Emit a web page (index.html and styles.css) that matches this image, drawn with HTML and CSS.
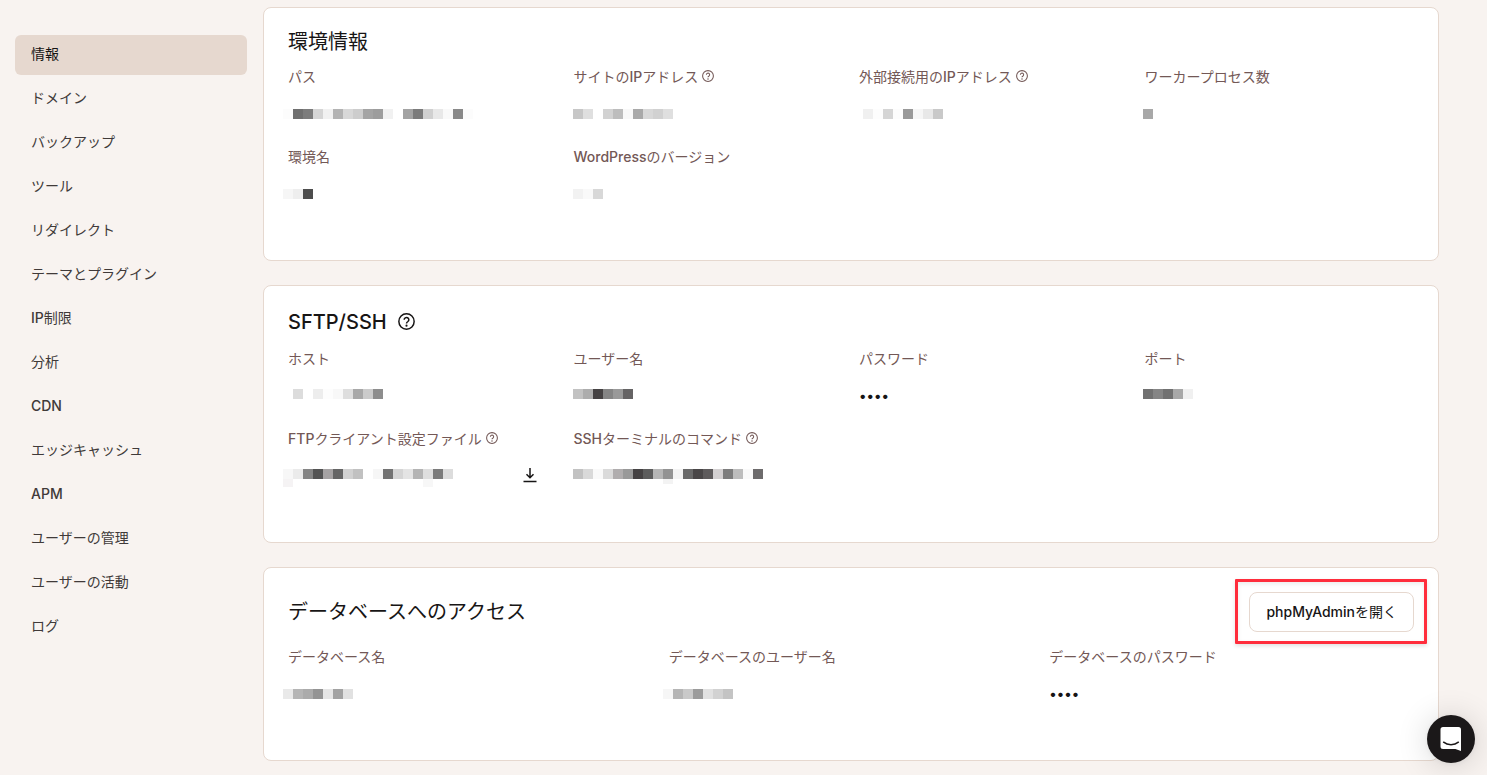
FILE: index.html
```html
<!DOCTYPE html>
<html lang="ja">
<head>
<meta charset="utf-8">
<meta name="viewport" content="width=device-width, initial-scale=1">
<title>情報</title>
<link rel="stylesheet" href="styles.css">
</head>
<body>
<svg class="symbols" aria-hidden="true">
  <symbol id="help" viewBox="0 0 16 16">
    <circle cx="8" cy="8" r="7.2" fill="none" stroke="currentColor" stroke-width="1.4"/>
    <path d="M5.8 6.300a2.200 2.100 0 1 1 3.500 1.700C8.400 8.600 8 8.900 8 9.800" fill="none" stroke="currentColor" stroke-width="1.400"/>
    <circle cx="8" cy="11.900" r="1" fill="currentColor"/>
  </symbol>
</svg>
<div class="layout">
  <nav class="sidebar" aria-label="サイトメニュー">
    <a class="nav-item active" href="#info" aria-current="page">情報</a>
    <a class="nav-item" href="#domains">ドメイン</a>
    <a class="nav-item" href="#backups">バックアップ</a>
    <a class="nav-item" href="#tools">ツール</a>
    <a class="nav-item" href="#redirects">リダイレクト</a>
    <a class="nav-item" href="#plugins">テーマとプラグイン</a>
    <a class="nav-item" href="#ip"><span class="latin">IP</span>制限</a>
    <a class="nav-item" href="#analytics">分析</a>
    <a class="nav-item" href="#cdn"><span class="latin">CDN</span></a>
    <a class="nav-item" href="#edge">エッジキャッシュ</a>
    <a class="nav-item" href="#apm"><span class="latin">APM</span></a>
    <a class="nav-item" href="#users">ユーザーの管理</a>
    <a class="nav-item" href="#activity">ユーザーの活動</a>
    <a class="nav-item" href="#logs">ログ</a>
  </nav>

  <main class="main">
    <section class="card">
      <h2 class="title title-compact">環境情報</h2>
      <dl class="grid">
        <div class="item">
          <dt class="label">パス</dt>
          <dd class="value"><svg class="mosaic" width="190" height="10"><path fill="#fcfcfc" d="M-5 0h10v10h-10z"/><path fill="#6f6f6f" d="M5 0h10v10H5z"/><path fill="#7c7c7c" d="M15 0h10v10H15z"/><path fill="#d5d5d5" d="M25 0h10v10H25z"/><path fill="#f1f1f1" d="M35 0h10v10H35z"/><path fill="#b3b3b3" d="M45 0h10v10H45z"/><path fill="#d8d8d8" d="M55 0h10v10H55z"/><path fill="#cdcdcd" d="M65 0h10v10H65z"/><path fill="#a4a4a4" d="M75 0h10v10H75z"/><path fill="#9d9d9d" d="M85 0h10v10H85z"/><path fill="#f1f1f1" d="M95 0h10v10H95z"/><path fill="#a3a3a3" d="M115 0h10v10h-10z"/><path fill="#7b7b7b" d="M125 0h10v10h-10z"/><path fill="#d0d0d0" d="M135 0h10v10h-10z"/><path fill="#e8e8e8" d="M145 0h10v10h-10z"/><path fill="#f9f9f9" d="M155 0h10v10h-10z"/><path fill="#898989" d="M165 0h10v10h-10z"/><path fill="#fcfcfc" d="M175 0h10v10h-10z"/></svg></dd>
        </div>
        <div class="item">
          <dt class="label"><span>サイトの<span class="latin">IP</span>アドレス</span> <button class="help" type="button" aria-label="サイトのIPアドレスのヘルプ"><svg><use href="#help"/></svg></button></dt>
          <dd class="value"><svg class="mosaic" width="100" height="10" viewBox="1 0 100 10"><path fill="#c7c7c7" d="M0 0h10v10H0z"/><path fill="#dfdfdf" d="M10 0h10v10H10z"/><path fill="#d2d2d2" d="M30 0h10v10H30z"/><path fill="#bdbdbd" d="M40 0h10v10H40z"/><path fill="#f8f8f8" d="M50 0h10v10H50z"/><path fill="#a9a9a9" d="M60 0h10v10H60z"/><path fill="#d8d8d8" d="M70 0h10v10H70z"/><path fill="#d1d1d1" d="M80 0h10v10H80z"/><path fill="#dfdfdf" d="M90 0h10v10H90z"/></svg></dd>
        </div>
        <div class="item">
          <dt class="label"><span>外部接続用の<span class="latin">IP</span>アドレス</span> <button class="help" type="button" aria-label="外部接続用のIPアドレスのヘルプ"><svg><use href="#help"/></svg></button></dt>
          <dd class="value"><svg class="mosaic" width="90" height="10"><path fill="#f0f0f0" d="M4 0h10v10H4z"/><path fill="#fdfdfd" d="M14 0h10v10H14z"/><path fill="#d5d5d5" d="M24 0h10v10H24z"/><path fill="#fcfcfc" d="M34 0h10v10H34z"/><path fill="#999" d="M44 0h10v10H44z"/><path fill="#f6f6f6" d="M54 0h10v10H54z"/><path fill="#e8e8e8" d="M64 0h10v10H64z"/><path fill="#c9c9c9" d="M74 0h10v10H74z"/></svg></dd>
        </div>
        <div class="item">
          <dt class="label">ワーカープロセス数</dt>
          <dd class="value"><svg class="mosaic" width="20" height="10" viewBox="1 0 20 10"><path fill="#a8a8a8" d="M-1 0h10v10H-1z"/></svg></dd>
        </div>
        <div class="item">
          <dt class="label">環境名</dt>
          <dd class="value"><svg class="mosaic" width="30" height="10"><path fill="#f6f6f6" d="M-5 0h10v10h-10z"/><path fill="#eee" d="M5 0h10v10H5z"/><path fill="#4d4d4d" d="M15 0h10v10H15z"/></svg></dd>
        </div>
        <div class="item">
          <dt class="label"><span><span class="latin">WordPress</span>のバージョン</span></dt>
          <dd class="value"><svg class="mosaic" width="30" height="10" viewBox="1 0 30 10"><path fill="#f2f2f2" d="M0 0h10v10H0z"/><path fill="#f9f9f9" d="M10 0h10v10H10z"/><path fill="#d8d8d8" d="M20 0h10v10H20z"/></svg></dd>
        </div>
      </dl>
    </section>

    <section class="card">
      <h2 class="title"><span class="latin">SFTP/SSH</span> <button class="help help-large" type="button" aria-label="SFTP/SSHのヘルプ"><svg><use href="#help"/></svg></button></h2>
      <dl class="grid">
        <div class="item">
          <dt class="label">ホスト</dt>
          <dd class="value"><svg class="mosaic" width="100" height="14"><path fill="#dcdcdc" d="M5 0h10v10H5z"/><path fill="#ededed" d="M25 0h10v10H25z"/><path fill="#fdfdfd" d="M35 0h10v10H35z"/><path fill="#f8f8f8" d="M45 0h10v10H45z"/><path fill="#dedede" d="M55 0h10v10H55z"/><path fill="#a8a8a8" d="M65 0h10v10H65z"/><path fill="#cbcbcb" d="M75 0h10v10H75z"/><path fill="#8d8d8d" d="M85 0h10v10H85z"/></svg></dd>
        </div>
        <div class="item">
          <dt class="label">ユーザー名</dt>
          <dd class="value"><svg class="mosaic" width="60" height="14" viewBox="1 0 60 14"><path fill="#c2c2c2" d="M0 0h10v10H0z"/><path fill="#adadad" d="M10 0h10v10H10z"/><path fill="#454243" d="M20 0h10v10H20z"/><path fill="#858585" d="M30 0h10v10H30z"/><path fill="#999" d="M40 0h10v10H40z"/><path fill="#656364" d="M50 0h10v10H50z"/></svg></dd>
        </div>
        <div class="item">
          <dt class="label">パスワード</dt>
          <dd class="value dots">••••</dd>
        </div>
        <div class="item">
          <dt class="label">ポート</dt>
          <dd class="value"><svg class="mosaic" width="50" height="14" viewBox="1 0 50 14"><path fill="#717171" d="M-1 0h10v10H-1z"/><path fill="#858585" d="M9 0h10v10H9z"/><path fill="#717171" d="M19 0h10v10H19z"/><path fill="#a8a8a8" d="M29 0h10v10H29z"/><path fill="#f0f0f0" d="M39 0h10v10H39z"/></svg></dd>
        </div>
        <div class="item">
          <dt class="label"><span><span class="latin">FTP</span>クライアント設定ファイル</span> <button class="help" type="button" aria-label="FTPクライアント設定ファイルのヘルプ"><svg><use href="#help"/></svg></button></dt>
          <dd class="value"><svg class="mosaic" width="170" height="14"><path fill="#f7f7f7" d="M-5 0h10v10h-10zM135 10h10v8h-10z"/><path fill="#f5f3f4" d="M-5 10h10v8h-10z"/><path fill="#ebebeb" d="M5 0h10v10H5z"/><path fill="#858585" d="M15 0h10v10H15z"/><path fill="#535353" d="M25 0h10v10H25z"/><path fill="#a5a2a3" d="M35 0h10v10H35z"/><path fill="#656565" d="M45 0h10v10H45z"/><path fill="#d1d1d1" d="M55 0h10v10H55z"/><path fill="#c1c1c1" d="M65 0h10v10H65z"/><path fill="#f6f6f6" d="M85 0h10v10H85z"/><path fill="#737373" d="M95 0h10v10H95z"/><path fill="#d5d5d5" d="M105 0h10v10h-10z"/><path fill="#e4e4e4" d="M115 0h10v10h-10z"/><path fill="#b4b4b4" d="M125 0h10v10h-10z"/><path fill="#dedede" d="M135 0h10v10h-10z"/><path fill="#7b7b7b" d="M145 0h10v10h-10z"/><path fill="#dcdcdc" d="M155 0h10v10h-10z"/></svg>
            <button class="download" type="button" aria-label="ダウンロード"><svg width="16" height="16" viewBox="0 0 16 16" fill="none" stroke="currentColor" stroke-width="1.500"><path d="M8 0v9.500M4.500 6.200 8 9.700l3.500-3.500M1.500 13.500h13"/></svg></button></dd>
        </div>
        <div class="item">
          <dt class="label"><span><span class="latin">SSH</span>ターミナルのコマンド</span> <button class="help" type="button" aria-label="SSHターミナルのコマンドのヘルプ"><svg><use href="#help"/></svg></button></dt>
          <dd class="value"><svg class="mosaic" width="190" height="14" viewBox="1 0 190 14"><path fill="#c2c2c2" d="M0 0h10v10H0z"/><path fill="#d9d9d9" d="M10 0h10v10H10z"/><path fill="#f9f9f9" d="M20 0h10v10H20z"/><path fill="#dadada" d="M30 0h10v10H30z"/><path fill="#b0adae" d="M40 0h10v10H40z"/><path fill="#999" d="M50 0h10v10H50z"/><path fill="#454243" d="M60 0h10v10H60z"/><path fill="#5d5d5d" d="M70 0h10v10H70z"/><path fill="#b6b6b6" d="M80 0h10v10H80z"/><path fill="#939393" d="M90 0h10v10H90z"/><path fill="#f3f3f3" d="M100 0h10v10h-10zM90 10h10v5H90z"/><path fill="#696969" d="M110 0h10v10h-10z"/><path fill="#494647" d="M120 0h10v10h-10z"/><path fill="#5e5b5c" d="M130 0h10v10h-10z"/><path fill="#d3d0d1" d="M140 0h10v10h-10z"/><path fill="#7d7d7d" d="M150 0h10v10h-10z"/><path fill="#bdbdbd" d="M160 0h10v10h-10z"/><path fill="#f9f9f9" d="M170 0h10v10h-10z"/><path fill="#6d6b6c" d="M180 0h10v10h-10z"/></svg></dd>
        </div>
      </dl>
    </section>

    <section class="card">
      <header class="card-header">
        <h2 class="title">データベースへのアクセス</h2>
        <div class="highlight"><button class="button" type="button"><span class="latin">phpMyAdmin</span>を開く</button></div>
      </header>
      <dl class="grid grid-three">
        <div class="item">
          <dt class="label">データベース名</dt>
          <dd class="value"><svg class="mosaic" width="70" height="10"><path fill="#e9e9e9" d="M-5 0h10v10h-10z"/><path fill="#b5b5b5" d="M5 0h10v10H5z"/><path fill="#ababab" d="M15 0h10v10H15z"/><path fill="#949494" d="M25 0h10v10H25z"/><path fill="#e5e5e5" d="M35 0h10v10H35z"/><path fill="#a2a2a2" d="M45 0h10v10H45z"/><path fill="#e1e1e1" d="M55 0h10v10H55z"/></svg></dd>
        </div>
        <div class="item">
          <dt class="label">データベースのユーザー名</dt>
          <dd class="value"><svg class="mosaic" width="70" height="10"><path fill="#f6f6f6" d="M-6 0H4v10H-6z"/><path fill="#b5b5b5" d="M4 0h10v10H4z"/><path fill="#c9c9c9" d="M14 0h10v10H14z"/><path fill="#9b9b9b" d="M24 0h10v10H24z"/><path fill="#e1e1e1" d="M34 0h10v10H34z"/><path fill="#d2d2d2" d="M44 0h10v10H44z"/><path fill="#c4c4c4" d="M54 0h10v10H54z"/></svg></dd>
        </div>
        <div class="item">
          <dt class="label">データベースのパスワード</dt>
          <dd class="value dots">••••</dd>
        </div>
      </dl>
    </section>
  </main>
</div>

<button class="chat" type="button" aria-label="チャットを開く">
  <svg width="24" height="26" viewBox="0 0 24 26"><path fill="#fff" d="M4 1h15.500a2.500 2.500 0 0 1 2.500 2.500V25l-5.600-2H4a2.500 2.500 0 0 1-2.500-2.500v-17A2.500 2.500 0 0 1 4 1z"/><path d="M4.600 16.200c4 3.300 10.800 3.300 14.800 0" fill="none" stroke="#1b1819" stroke-width="1.500" stroke-linecap="round"/></svg>
</button>
</body>
</html>
```
FILE: styles.css
```css
* {
  box-sizing: border-box;
}

body {
  margin: 0;
  background: #f8f3f0;
  color: #171515;
  font-family: Inter, "Noto Sans CJK JP", sans-serif;
  font-size: 14px;
  font-weight: 400;
  line-height: 20px;
}

button {
  font: inherit;
  color: inherit;
  cursor: pointer;
}

.latin {
  font-weight: 500;
}

.symbols {
  display: none;
}

.layout {
  display: flex;
  gap: 16px;
  padding: 7px 48px 14px 15px;
}

.sidebar {
  display: flex;
  flex-direction: column;
  flex: 0 0 232px;
  gap: 4px;
  padding-top: 28px;
}

.nav-item {
  padding: 9px 16px 11px;
  border-radius: 6px;
  color: #403a39;
  text-decoration: none;
}

.nav-item.active {
  background: #e6d8cf;
  color: #171515;
}

.main {
  display: flex;
  flex-direction: column;
  flex: 1;
  gap: 24px;
  min-width: 0;
}

.card {
  padding: 24px 24px 33px;
  border: 1px solid #e6d8cf;
  border-radius: 8px;
  background: #fff;
}

.card-header {
  display: flex;
  align-items: center;
  justify-content: space-between;
}

.title {
  display: flex;
  align-items: center;
  gap: 11px;
  margin: 0;
  font-size: 20px;
  font-weight: 400;
  line-height: 24px;
}

.title-compact {
  line-height: 20px;
}

.grid {
  display: grid;
  grid-template-columns: repeat(4, minmax(0, 1fr));
  column-gap: 16px;
  margin: 15px 0 0;
}

.grid-three {
  grid-template-columns: repeat(3, minmax(0, 1fr));
}

.item {
  padding-bottom: 22px;
}

.label {
  display: flex;
  align-items: center;
  gap: 4px;
  color: #735856;
}

.value {
  display: flex;
  align-items: center;
  height: 22px;
  margin: 16px 0 0;
}

.mosaic {
  display: block;
  overflow: visible;
  shape-rendering: crispEdges;
}

.dots {
  font-weight: 500;
  line-height: 18px;
}

.help {
  display: flex;
  width: 12px;
  height: 14px;
  padding: 0 0 2px;
  border: 0;
  background: none;
}

.help svg {
  width: 100%;
  height: 100%;
}

.help-large {
  width: 17px;
  height: 18px;
  padding-bottom: 1px;
}

.download {
  display: flex;
  align-items: center;
  justify-content: center;
  width: 40px;
  height: 22px;
  margin: 0 8px 0 auto;
  padding: 0;
  border: 0;
  background: none;
}

.highlight {
  position: relative;
}

.highlight::after {
  content: "";
  position: absolute;
  inset: -13px -13px -12px -14px;
  border: 3px solid #ff2d3c;
  border-radius: 1px;
  box-shadow: 0 2px 4px rgba(0, 0, 0, 0.12), inset 0 2px 4px rgba(0, 0, 0, 0.08);
  pointer-events: none;
}

.button {
  display: block;
  height: 40px;
  padding: 0 16px;
  border: 1px solid #e6d8cf;
  border-radius: 8px;
  background: #fff;
}

.chat {
  display: flex;
  align-items: center;
  justify-content: center;
  position: fixed;
  right: 12px;
  bottom: 12px;
  width: 48px;
  height: 48px;
  padding: 0;
  border: 0;
  border-radius: 50%;
  background: #1b1819;
  box-shadow: 0 1px 6px rgba(0, 0, 0, 0.06), 0 2px 32px rgba(0, 0, 0, 0.16);
}
```
